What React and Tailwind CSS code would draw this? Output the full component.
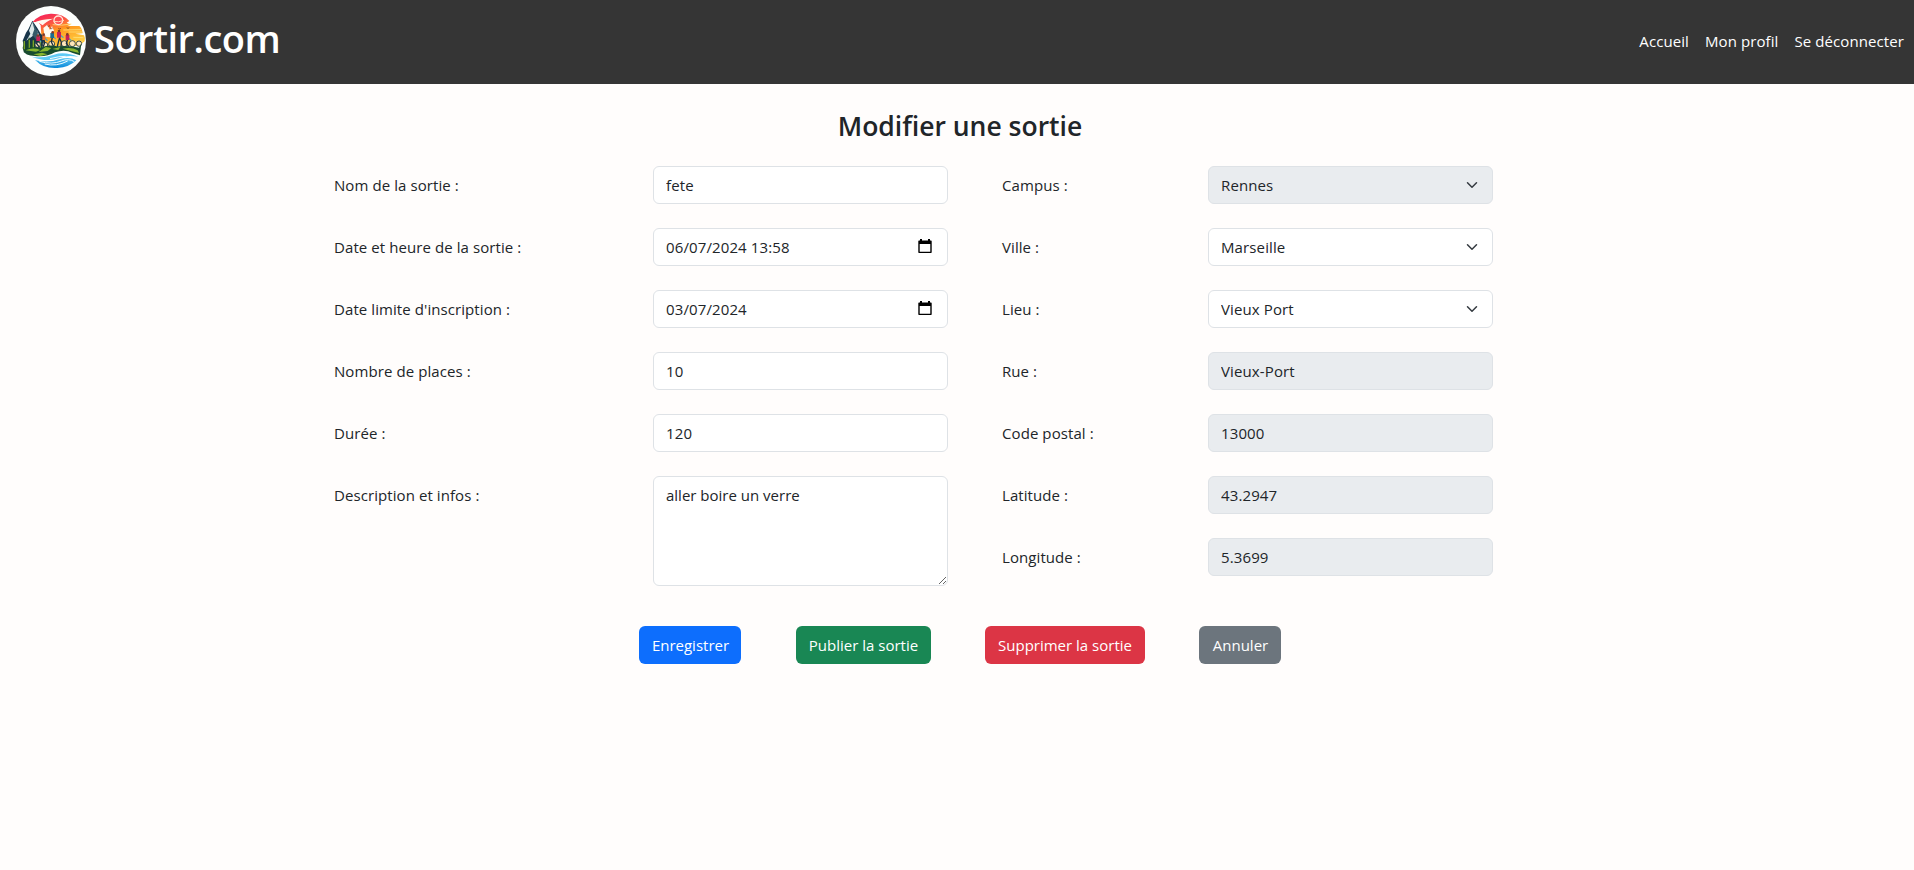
import React from "react";

function Logo() {
  return (
    <svg viewBox="18 18 210 210" className="size-[70px] shrink-0">
      <defs>
        <linearGradient id="sky" x1="0" y1="0" x2="0.5" y2="1">
          <stop offset="0" stopColor="#f4145e" />
          <stop offset="0.35" stopColor="#fb5147" />
          <stop offset="0.6" stopColor="#ff9a1f" />
          <stop offset="1" stopColor="#ffc93e" />
        </linearGradient>
        <linearGradient id="water" x1="0" y1="0" x2="0" y2="1">
          <stop offset="0" stopColor="#5fcaf5" />
          <stop offset="1" stopColor="#0787d8" />
        </linearGradient>
      </defs>
      <circle cx="123" cy="123" r="105" fill="#fdfffe" />
      <path d="M68 66Q88 42 122 41Q158 40 178 63L170 68L182 74L172 78H208Q216 84 218 100L196 101L222 106Q226 112 224 124L206 138H96L92 76L84 66Z" fill="url(#sky)" />
      <path d="M70 69Q92 57 130 56Q106 65 98 76L88 70ZM100 84L112 74L120 90L126 78L132 92L120 112L104 110Z" fill="#fffaf0" />
      <path d="M128 74Q154 78 184 72M160 90L214 89M176 96H216M190 112L220 113M196 124H218" stroke="#ffe27a" strokeWidth="2.5" fill="none" />
      <circle cx="145" cy="61" r="13" fill="#ff4a52" stroke="#ffe9dc" strokeWidth="4" />
      <path d="M130 64Q145 68 162 61" stroke="#ffd4b4" strokeWidth="3" fill="none" />
      <path d="M112 77l4 2 4-2M120 84l4 2 4-2M145 85l4 2 4-2M170 83l4 2 4-2" stroke="#5a2320" strokeWidth="2" fill="none" />
      <path d="M38 122L48 98L55 88L67 62L82 84L92 101L104 111L98 140H42Z" fill="#17364a" />
      <path d="M67 66L57 92L61 101L49 122L68 108L76 88L72 76ZM82 91L79 112L91 117Z" fill="#dce9e9" />
      <path d="M67 66L73 88L67 105L80 121L84 96Z" fill="#355a68" />
      <path d="M38 144L43 119L50 138L57 110L65 137L70 112L79 141L91 116L97 147L42 158Z" fill="#17462e" />
      <path d="M43 123V148M58 119V149M70 121V150M91 122V145" stroke="#7da329" strokeWidth="4" />
      <g stroke="#203844" strokeWidth="2.5" fill="#ffe7b9">
        <circle cx="83" cy="134" r="8" /><circle cx="105" cy="135" r="8" />
        <circle cx="125" cy="132" r="9" /><circle cx="163" cy="131" r="9" />
        <circle cx="187" cy="131" r="9" /><circle cx="207" cy="131" r="8" />
      </g>
      <g strokeWidth="4" strokeLinecap="round" fill="none">
        <path d="M84 117l-4 14 7 9M101 115l3 14-4 10M127 112l-3 14 6 12M149 112l-4 15-3 12M149 115l5 12-1 12M173 118l-4 12 7 9" stroke="#172e43" />
        <path d="M84 116l8 9M104 113l7 8M128 107l8 9M149 104l10 8M174 113l8 7" stroke="#50a4b9" />
      </g>
      <path d="M79 109h11v14H79zM141 96h12v17h-12zM167 105h11v15h-11z" fill="#c91f57" />
      <path d="M97 106h9v14h-9z" fill="#ef702b" />
      <path d="M121 99h11v15h-11z" fill="#176f93" />
      <g fill="#7e382b"><circle cx="84" cy="107" r="4" /><circle cx="101" cy="104" r="4" /><circle cx="128" cy="97" r="4" /><circle cx="147" cy="93" r="4" /><circle cx="172" cy="103" r="4" /></g>
      <path d="M42 151Q65 136 91 143Q118 133 141 139Q181 135 207 143L214 130L210 166L188 159Q164 146 135 157Q109 172 75 168Q43 168 42 151Z" fill="#184c2e" />
      <path d="M47 151Q68 141 91 150L78 155ZM86 156L107 141L124 144L113 153ZM127 147L151 141L145 150ZM158 146Q186 141 203 151L207 159ZM70 163L96 158L112 163L91 168Z" fill="#88b52f" />
      <path d="M65 170Q97 176 132 164Q164 153 206 171Q174 164 149 174Q111 188 65 170Z" fill="#5fcaf5" />
      <path d="M75 180Q114 190 148 178Q178 168 199 181Q178 202 142 204Q101 207 75 180Z" fill="url(#water)" />
      <path d="M88 184Q126 195 154 183Q176 174 193 185M104 192Q139 201 173 183M120 176Q149 168 167 169" stroke="#effcff" strokeWidth="3" fill="none" />
    </svg>
  );
}

const field =
  "block h-[38px] w-full rounded-md border border-[#dee2e6] px-3 text-[15px] leading-6 tracking-[0.12px] text-[#212529] outline-none";

function Row({ label, labelClass, boxClass, children }) {
  return (
    <div className="flex items-start">
      <label className={`${labelClass} shrink-0 pt-[7px] text-[15px] leading-6 tracking-[0.08px]`}>
        <span>{label}</span>
      </label>
      <div className={`${boxClass} relative`}>{children}</div>
    </div>
  );
}

function Left(props) {
  return <Row {...props} labelClass="w-[319px]" boxClass="w-[295px]" />;
}

function Right(props) {
  return <Row {...props} labelClass="w-[206px]" boxClass="w-[285px]" />;
}

function Text({ value, disabled }) {
  return (
    <input
      type="text"
      defaultValue={value}
      disabled={disabled}
      className={`${field} ${disabled ? "bg-[#e9ecef]" : "bg-white"}`}
    />
  );
}

function DateField({ value }) {
  return (
    <>
      <Text value={value} />
      <svg viewBox="0 0 14 16" className="absolute top-[11px] right-4 h-4 w-[14px]">
        <path fill="#000" fillRule="evenodd" d="M2 0h2v1.5h6V0h2v1.5h1q.7 0 .7.7v11.1q0 .7-.7.7H1q-.7 0-.7-.7V2.200q0-.7.7-.7h1zM1.700 5v7.700h10.600V5z" />
      </svg>
    </>
  );
}

function Select({ value, disabled }) {
  return (
    <>
      <select
        disabled={disabled}
        defaultValue={value}
        className={`${field} appearance-none opacity-100 ${disabled ? "bg-[#e9ecef]" : "bg-white"}`}
      >
        <option>{value}</option>
      </select>
      <svg viewBox="0 0 16 16" className="pointer-events-none absolute top-[13px] right-[15px] size-3">
        <path d="m2 5 6 6 6-6" fill="none" stroke="#343a40" strokeWidth="2" strokeLinecap="round" strokeLinejoin="round" />
      </svg>
    </>
  );
}

export default function App() {
  return (
    <div className="min-h-[870px] bg-[#fffdfc] font-['Open_Sans',sans-serif] text-[#212529]">
      <header className="flex h-[84px] items-center justify-between bg-[#353535] pr-[10px] pl-4 text-white">
        <a className="flex items-center gap-2 pb-0.5">
          <Logo />
          <span className="pb-1.5 text-[38px] leading-[48px] font-semibold tracking-[-0.5px]">Sortir.com</span>
        </a>
        <nav className="flex gap-4 pb-0.5 text-[15px] leading-6 tracking-[0.09px]">
          <a>Accueil</a>
          <a>Mon profil</a>
          <a>Se déconnecter</a>
        </nav>
      </header>
      <main>
        <h2 className="pt-[25px] pl-[6px] text-center text-[26.5px] leading-[34px] font-semibold">
          <span>Modifier une sortie</span>
        </h2>
        <form className="flex gap-[54px] pt-[23px] pl-[334px]">
          <div className="flex flex-col gap-6">
            <Left label="Nom de la sortie :"><Text value="fete" /></Left>
            <Left label="Date et heure de la sortie :"><DateField value="06/07/2024 13:58" /></Left>
            <Left label="Date limite d'inscription :"><DateField value="03/07/2024" /></Left>
            <Left label="Nombre de places :"><Text value="10" /></Left>
            <Left label="Durée :"><Text value="120" /></Left>
            <Left label="Description et infos :">
              <textarea
                defaultValue="aller boire un verre"
                className="block h-[110px] w-full rounded-md border border-[#dee2e6] bg-white px-3 py-[6px] text-[15px] leading-6 outline-none"
              />
            </Left>
          </div>
          <div className="flex flex-col gap-6">
            <Right label="Campus :"><Select value="Rennes" disabled /></Right>
            <Right label="Ville :"><Select value="Marseille" /></Right>
            <Right label="Lieu :"><Select value="Vieux Port" /></Right>
            <Right label="Rue :"><Text value="Vieux-Port" disabled /></Right>
            <Right label="Code postal :"><Text value="13000" disabled /></Right>
            <Right label="Latitude :"><Text value="43.2947" disabled /></Right>
            <Right label="Longitude :"><Text value="5.3699" disabled /></Right>
          </div>
        </form>
        <div className="flex gap-[54px] pt-10 pl-[639px] text-[15px] leading-6 text-white">
          <button className="mr-px h-[38px] w-[102px] rounded-md bg-[#0d6efd] pl-px whitespace-nowrap">Enregistrer</button>
          <button className="h-[38px] w-[135px] rounded-md bg-[#198754] whitespace-nowrap">Publier la sortie</button>
          <button className="h-[38px] w-[160px] rounded-md bg-[#dc3545] whitespace-nowrap">Supprimer la sortie</button>
          <button className="h-[38px] w-[82px] rounded-md bg-[#6c757d] pl-px whitespace-nowrap">Annuler</button>
        </div>
      </main>
    </div>
  );
}
